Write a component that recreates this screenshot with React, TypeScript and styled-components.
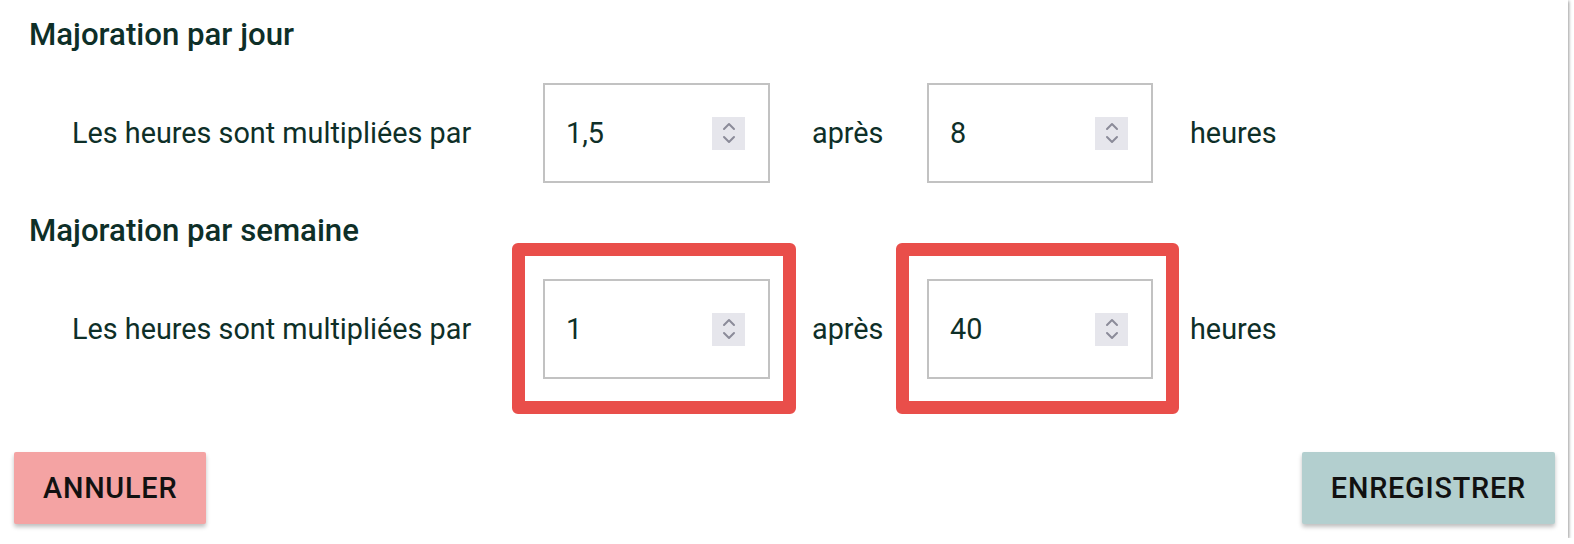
import React from "react";
import styled, { createGlobalStyle } from "styled-components";

const GlobalStyle = createGlobalStyle`
  html, body {
    margin: 0;
    padding: 0;
    background: #ffffff;
    font-family: Roboto, "Liberation Sans", sans-serif;
  }
`;

export const Card = styled.div`
  width: 1568px;
  box-sizing: border-box;
  background: #ffffff;
  box-shadow: 1px 1px 3px rgba(0, 0, 0, 0.4);
  padding: 17px 13px 14px 14px;
  display: flex;
  flex-direction: column;
`;

export const Section_title = styled.div`
  font-size: 31.2px;
  line-height: 36px;
  font-weight: 500;
  color: #0e2f28;
  padding-left: 15px;
`;

export const Row = styled.div<{ $last?: boolean }>`
  display: grid;
  grid-template-columns: 471px 227px 157px 226px auto;
  align-items: center;
  margin: 30px 0 ${(p) => (p.$last ? 73 : 30)}px 58px;
  color: #0e2f28;
  font-size: 28.8px;
`;

export const Label = styled.div<{ $pad?: number }>`
  padding-left: ${(p) => p.$pad ?? 0}px;
  white-space: nowrap;
`;

export const Number_box = styled.div<{ $flagged?: boolean }>`
  position: relative;
  box-sizing: border-box;
  height: 100px;
  border: 2px solid #c2c2c2;
  display: flex;
  align-items: center;
  padding: 0 23px 0 21px;

  ${(p) =>
    p.$flagged &&
    `
    &::after {
      content: "";
      position: absolute;
      left: -33px;
      top: -38px;
      right: -28px;
      bottom: -37px;
      border: 13px solid #e94e4a;
      border-radius: 6px;
      pointer-events: none;
    }
  `}
`;

export const Field = styled.input`
  flex: 1;
  min-width: 0;
  border: none;
  outline: none;
  background: transparent;
  font-family: Roboto, "Liberation Sans", sans-serif;
  font-size: 28.8px;
  color: #0e2f28;
  padding: 0;
`;

export const Spinner = styled.div`
  width: 33px;
  height: 33px;
  background: #e6e6ec;
  display: flex;
  align-items: center;
  justify-content: center;
`;

export const Actions = styled.div`
  display: flex;
  justify-content: space-between;
`;

export const Btn = styled.button<{ $bg: string }>`
  height: 72px;
  padding: 0 29px;
  border: none;
  border-radius: 2px;
  background: ${(p) => p.$bg};
  color: #111111;
  font-family: Roboto, "Liberation Sans", sans-serif;
  font-size: 28.8px;
  font-weight: 500;
  letter-spacing: 0.8px;
  text-transform: uppercase;
  box-shadow: 0 3px 4px rgba(0, 0, 0, 0.25);
  cursor: pointer;
`;

const Chevrons = () => (
  <svg width="14" height="24" viewBox="0 0 14 24" fill="none">
    <path d="M2 8 L7 3 L12 8" stroke="#8b8b99" strokeWidth="2" strokeLinecap="round" strokeLinejoin="round" />
    <path d="M2 16 L7 21 L12 16" stroke="#8b8b99" strokeWidth="2" strokeLinecap="round" strokeLinejoin="round" />
  </svg>
);

const NumberInput: React.FC<{ value: string; flagged?: boolean }> = ({ value, flagged }) => (
  <Number_box $flagged={flagged}>
    <Field defaultValue={value} />
    <Spinner>
      <Chevrons />
    </Spinner>
  </Number_box>
);

const Majoration: React.FC<{
  title: string;
  factor: string;
  hours: string;
  flagged?: boolean;
  last?: boolean;
}> = ({ title, factor, hours, flagged, last }) => (
  <>
    <Section_title>{title}</Section_title>
    <Row $last={last}>
      <Label>Les heures sont multipliées par</Label>
      <NumberInput value={factor} flagged={flagged} />
      <Label $pad={42}>après</Label>
      <NumberInput value={hours} flagged={flagged} />
      <Label $pad={37}>heures</Label>
    </Row>
  </>
);

export default function App() {
  return (
    <>
      <GlobalStyle />
      <Card>
        <Majoration title="Majoration par jour" factor="1,5" hours="8" />
        <Majoration title="Majoration par semaine" factor="1" hours="40" flagged last />
        <Actions>
          <Btn $bg="#f4a3a3">Annuler</Btn>
          <Btn $bg="#b3cfcf">Enregistrer</Btn>
        </Actions>
      </Card>
    </>
  );
}
